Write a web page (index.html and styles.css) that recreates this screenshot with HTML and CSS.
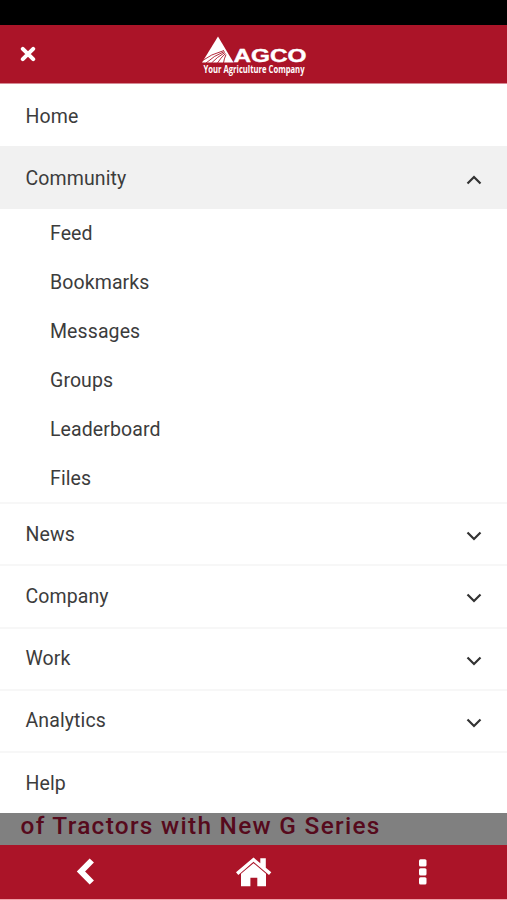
FILE: index.html
```
<!DOCTYPE html>
<html lang="en">

<head>
    <meta charset="UTF-8" />
    <meta name="viewport" content="width=device-width, initial-scale=1.0" />
    <title>AGCO</title>
    <link rel="stylesheet" href="styles.css">
</head>

<body>

    <div class="status-bar"></div>

    <header class="header">
        <button class="close-btn" aria-label="Close menu">
            <svg width="16" height="16" viewBox="0 0 16 16">
                <path d="M2.8 2.8L13.2 13.2M13.2 2.8L2.8 13.2" />
            </svg>
        </button>
        <svg class="logo" width="110" height="48" viewBox="0 0 110 48">
            <path class="logo-mark" d="M18 3.500L33.500 29.500H2Z" />
            <path class="logo-rows" d="M24 17.500Q11 21 1 28.500M24.500 18.500Q14 22.500 6 30M25 19.500Q17 24 11.500 30M25.500 20.500Q20.500 25 17.500 30M26 21.500Q24 26 23.500 30" />
            <text class="logo-name" x="33.500" y="29.300" textLength="73" lengthAdjust="spacingAndGlyphs">AGCO</text>
            <text class="logo-tagline" x="3.500" y="40.300" textLength="101" lengthAdjust="spacingAndGlyphs">Your Agriculture Company</text>
        </svg>
    </header>

    <nav class="menu">
        <a class="menu-item">Home</a>
        <a class="menu-item open">Community
            <svg class="chevron" width="16" height="10" viewBox="0 0 16 10"><path d="M1.500 8.500L8 2L14.500 8.500" /></svg>
        </a>

        <div class="submenu">
            <a class="submenu-item">Feed</a>
            <a class="submenu-item">Bookmarks</a>
            <a class="submenu-item">Messages</a>
            <a class="submenu-item">Groups</a>
            <a class="submenu-item">Leaderboard</a>
            <a class="submenu-item">Files</a>
        </div>

        <a class="menu-item">News
            <svg class="chevron" width="16" height="10" viewBox="0 0 16 10"><path d="M1.500 1.500L8 8L14.500 1.500" /></svg>
        </a>
        <a class="menu-item">Company
            <svg class="chevron" width="16" height="10" viewBox="0 0 16 10"><path d="M1.500 1.500L8 8L14.500 1.500" /></svg>
        </a>
        <a class="menu-item">Work
            <svg class="chevron" width="16" height="10" viewBox="0 0 16 10"><path d="M1.500 1.500L8 8L14.500 1.500" /></svg>
        </a>
        <a class="menu-item">Analytics
            <svg class="chevron" width="16" height="10" viewBox="0 0 16 10"><path d="M1.500 1.500L8 8L14.500 1.500" /></svg>
        </a>
        <a class="menu-item">Help</a>
    </nav>

    <!-- dimmed page behind the menu -->
    <div class="page-behind">of Tractors with New G Series</div>

    <footer class="toolbar">
        <button class="tool-btn" aria-label="Back">
            <svg width="18" height="28" viewBox="0 0 18 28">
                <path class="back" d="M15.800 2.500L5 13.500L15.800 24.500" />
            </svg>
        </button>
        <button class="tool-btn" aria-label="Home">
            <svg width="36" height="30" viewBox="0 0 36 30">
                <path d="M17.500 0.500L24.300 6.200V1.200H29.800V10.800L35.300 15.300L33 18L17.500 4.800L2.300 18L0 15.300Z" />
                <path d="M17.500 6.200L30 16.800V29.200H21.300V20.800H14.400V29.200H5V16.800Z" />
            </svg>
        </button>
        <button class="tool-btn" aria-label="More">
            <svg width="8" height="28" viewBox="0 0 8 28">
                <rect x="0" y="1.300" width="7.500" height="7.200" rx="1.500" />
                <rect x="0" y="10.300" width="7.500" height="7.200" rx="1.500" />
                <rect x="0" y="19.300" width="7.500" height="7.200" rx="1.500" />
            </svg>
        </button>
    </footer>

</body>

</html>
```
FILE: styles.css
```
* {
    box-sizing: border-box;
}

body {
    display: flex;
    flex-direction: column;
    height: 900px;
    margin: 0;
    overflow: hidden;
    background: #fff;
    color: #3c3c3c;
    font-family: Roboto, "Liberation Sans", sans-serif;
    font-size: 19.5px;
}

button {
    padding: 0;
    border: none;
    background: none;
}

svg {
    display: block;
}

.status-bar {
    flex: none;
    height: 25px;
    background: #000;
}

.header {
    flex: none;
    display: grid;
    grid-template-columns: 1fr 110px 1fr;
    align-items: start;
    height: 59px;
    padding: 8px 18px 0 20px;
    background: #ab1428;
    border-bottom: 1px solid #d58a94;
}

.close-btn {
    justify-self: start;
    margin-top: 13px;
}

.close-btn path {
    fill: none;
    stroke: #fff;
    stroke-width: 4;
    stroke-linecap: round;
}

.logo-mark,
.logo-name,
.logo-tagline {
    fill: #fff;
}

.logo-rows {
    fill: none;
    stroke: #ab1428;
    stroke-width: 0.9;
}

.logo-name {
    font: bold 17.5px "Liberation Sans", sans-serif;
    stroke: #fff;
    stroke-width: 0.4;
}

.logo-tagline {
    font: bold 10px "Open Sans", sans-serif;
}

.menu {
    flex: none;
    letter-spacing: 0.1px;
}

.menu-item {
    display: flex;
    align-items: center;
    justify-content: space-between;
    height: 62.25px;
    padding: 0 25px 0 25.5px;
    border-top: 2px solid #f7f7f7;
}

.menu-item:first-child {
    border-top-color: #fff;
}

.menu-item.open {
    background: #f1f1f1;
    border-top-color: #f1f1f1;
}

.chevron {
    margin-top: 4px;
    fill: none;
    stroke: #333;
    stroke-width: 2.2;
}

.submenu {
    padding-bottom: 0.25px;
}

.submenu-item {
    display: flex;
    align-items: center;
    height: 49px;
    padding: 1px 50px 0;
}

.submenu + .menu-item {
    margin-top: -0.75px;
}

.page-behind {
    flex: 1;
    padding-left: 20.5px;
    overflow: hidden;
    background: #808080;
    color: #560a1c;
    font-size: 24.4px;
    font-weight: 500;
    line-height: 25px;
    letter-spacing: 1.3px;
    white-space: nowrap;
}

.toolbar {
    flex: none;
    display: grid;
    grid-template-columns: repeat(3, 1fr);
    height: 55px;
    background: #ab1428;
    border-bottom: 1px solid #f0a0a8;
}

.tool-btn {
    display: flex;
    align-items: center;
    justify-content: center;
}

.tool-btn svg {
    fill: #fff;
}

.tool-btn .back {
    fill: none;
    stroke: #fff;
    stroke-width: 6;
}
```
